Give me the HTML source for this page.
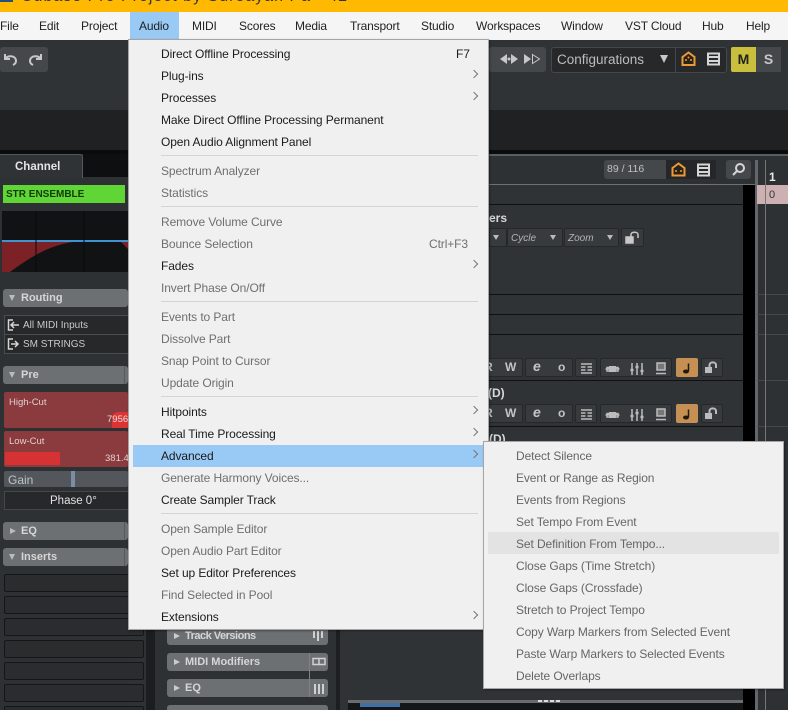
<!DOCTYPE html>
<html><head><meta charset="utf-8">
<style>
html,body{margin:0;padding:0;background:#2f3235}
#r{position:relative;width:788px;height:710px;overflow:hidden;font-family:"Liberation Sans",sans-serif;background:#2f3235}
#r div,#r span{position:absolute;white-space:nowrap}
.m{font-size:12px;letter-spacing:-.1px;color:#1b1b1b;line-height:16px;height:16px}
.i{left:161px}
.d{color:#6f6f6f}
.s{left:516px;color:#666}
.top{top:18px;font-size:12px;letter-spacing:-.15px;color:#222;line-height:16px}
.sep{left:161px;width:317px;height:1px;background:#d4d4d4}
.ar{left:471px;width:5px;height:5px;border-top:1px solid #777;border-right:1px solid #777;transform:rotate(45deg)}
.hd{background:#6d7073;border-radius:3px;height:18px;color:#d6d6d6;font-weight:bold;font-size:11px;line-height:19px}
.slot{left:4px;width:138px;height:16px;background:#2a2c2e;border:1px solid #151617;border-radius:2px}
.line{height:1px;background:#111}
.btn{background:#383b3e;border:1px solid #25272a;border-radius:2px;height:17px}
.g{color:#c4c4c4;font-weight:bold;font-size:12px}
.tri{width:0;height:0;border-left:3.500px solid transparent;border-right:3.500px solid transparent;border-top:6px solid #bbb}
</style></head><body>
<div id="r">
<div style="left:0;top:0;width:788px;height:12px;background:#ffb900"></div>
<div style="left:0;top:0;width:13px;height:2px;background:#23507f"></div>
<div style="left:21px;top:-11px;font-size:16px;line-height:16px;color:#333;letter-spacing:1px">Cubase Pro Project by Sureayan Pa - 42</div>
<div style="left:0;top:12px;width:788px;height:28px;background:#f5f5f5"></div>
<div style="left:130px;top:12px;width:49px;height:28px;background:#99c9f5"></div>
<span class="top" style="left:0">File</span><span class="top" style="left:39px">Edit</span><span class="top" style="left:81px">Project</span><span class="top" style="left:139px">Audio</span><span class="top" style="left:192px">MIDI</span><span class="top" style="left:239px">Scores</span><span class="top" style="left:295px">Media</span><span class="top" style="left:350px">Transport</span><span class="top" style="left:421px">Studio</span><span class="top" style="left:476px">Workspaces</span><span class="top" style="left:561px">Window</span><span class="top" style="left:625px">VST Cloud</span><span class="top" style="left:702px">Hub</span><span class="top" style="left:746px">Help</span>

<div style="left:0;top:40px;width:788px;height:70px;background:#303336"></div>
<div style="left:0;top:110px;width:788px;height:40px;background:#1f2123"></div>
<div style="left:0;top:150px;width:788px;height:4px;background:#0b0b0b"></div>
<div style="left:0;top:47px;width:48px;height:25px;background:#45484b;border-radius:3px"></div>
<svg style="position:absolute;left:2px;top:51px" width="44" height="17" fill="none" stroke="#c8c8c8" stroke-width="2"><path d="M3 3v5h5M3 8c2-4 11-4 11 2 0 2-1 3-3 4"/><path d="M39 3v5h-5M39 8c-2-4-11-4-11 2 0 2 1 3 3 4"/></svg>
<div style="left:489px;top:47px;width:57px;height:25px;background:#45484b;border-radius:3px"></div>
<svg style="position:absolute;left:498px;top:52px" width="46" height="14" fill="#c8c8c8"><path d="M2 7l7-5v10zM20 7l-7-5v10z"/><circle cx="11" cy="7" r="1.500"/><path d="M26 2l7 5-7 5z"/><path d="M34.500 2.500l7 4.500-7 4.500z" fill="none" stroke="#c8c8c8"/></svg>
<div style="left:551px;top:47px;width:174px;height:24px;background:#26282a;border:1px solid #45484b;border-radius:3px"></div>
<div style="left:557px;top:52px;font-size:13.500px;line-height:16px;color:#bdbdbd">Configurations</div>
<div style="left:660px;top:55px;border-left:4px solid transparent;border-right:4px solid transparent;border-top:8px solid #c8c8c8;width:0;height:0"></div>
<div style="left:675px;top:47px;width:1px;height:25px;background:#45484b"></div>
<svg style="position:absolute;left:681px;top:51px" width="15" height="16"><path d="M1.500 6L7.500 1.500 13.500 6V14H1.500z" fill="#2b2216" stroke="#ec9a3c" stroke-width="2"/><circle cx="5" cy="9" r="1" fill="#ec9a3c"/><circle cx="10" cy="9" r="1" fill="#ec9a3c"/><circle cx="7.500" cy="6.500" r="1" fill="#ec9a3c"/></svg>
<svg style="position:absolute;left:706px;top:52px" width="15" height="14" fill="none" stroke="#d5d5d5" stroke-width="2"><path d="M2 1.500H13V12.500H2zM2 5H13M2 9H13"/></svg>
<div style="left:731px;top:47px;width:25px;height:25px;background:#c9bf3c;border-radius:2px 0 0 2px;color:#222;font-weight:bold;font-size:14px;line-height:25px;text-align:center">M</div>
<div style="left:756px;top:47px;width:25px;height:25px;background:#45484b;color:#c8c8c8;font-weight:bold;font-size:14px;line-height:25px;text-align:center">S</div>

<!-- left panel -->
<div style="left:0;top:154px;width:128px;height:556px;background:#2e3134"></div>
<div style="left:0;top:154px;width:83px;height:24px;background:#303336;border:1px solid #55585b;border-bottom:0;border-left:0;border-radius:0 3px 0 0;box-sizing:border-box"></div>
<div style="left:83px;top:154px;width:50px;height:23px;background:#0e0f10"></div>
<div style="left:15px;top:159px;color:#e4e4e4;font-weight:bold;font-size:11.500px;line-height:16px">Channel</div>
<div style="left:3px;top:185px;width:122px;height:18px;background:#5fd635;color:#123a08;font-weight:bold;font-size:10px;line-height:19px;text-indent:3px">STR ENSEMBLE</div>
<div style="left:2px;top:211px;width:126px;height:61px;background:#101214"></div>
<svg style="position:absolute;left:2px;top:211px" width="128" height="61"><path d="M0 30V61H8C30 45 50 32 80 30H118L128 40V30z" fill="#7c2226"/><path d="M0 30H128" stroke="#3e93d0" stroke-width="2"/><path d="M34 0V61M82 0V61" stroke="#08090a"/></svg>
<div class="hd" style="left:3px;top:289px;width:125px;text-indent:18px">Routing</div>
<div class="tri" style="left:9px;top:295px"></div>
<div style="left:4px;top:315px;width:126px;height:18px;background:#26282a;border:1px solid #4a4d50"></div>
<div style="left:4px;top:334px;width:126px;height:18px;background:#26282a;border:1px solid #4a4d50"></div>
<div style="left:23px;top:318px;font-size:10px;line-height:15px;color:#c9c9c9">All MIDI Inputs</div>
<div style="left:23px;top:337px;font-size:10px;line-height:15px;color:#c9c9c9">SM STRINGS</div>
<svg style="position:absolute;left:7px;top:319px" width="14" height="31" fill="none" stroke="#d5d5d5" stroke-width="1.500"><path d="M6 1H1.500V11H6M12 6H5M7 3L4 6l3 3"/><path d="M6 20H1.500V30H6M4 25H11M8 22l3 3-3 3"/></svg>
<div class="hd" style="left:3px;top:366px;width:125px;text-indent:18px">Pre</div>
<div class="tri" style="left:9px;top:372px"></div>
<div style="left:124px;top:366px;width:1px;height:18px;background:#585b5e"></div>
<div style="left:4px;top:392px;width:124px;height:36px;background:#8b3a3e;border-radius:2px"></div>
<div style="left:112px;top:412px;width:16px;height:16px;background:#dc3434;border-radius:6px 0 0 0"></div>
<div style="left:9px;top:397px;color:#e0d0d0;font-size:9.500px;line-height:12px">High-Cut</div>
<div style="left:107px;top:414px;width:21px;overflow:hidden;color:#e7dede;font-size:9.500px;line-height:12px">7956Hz</div>
<div style="left:4px;top:431px;width:124px;height:36px;background:#8b3a3e;border-radius:2px"></div>
<div style="left:5px;top:452px;width:55px;height:13px;background:#d63234"></div>
<div style="left:9px;top:436px;color:#e0d0d0;font-size:9.500px;line-height:12px">Low-Cut</div>
<div style="left:105px;top:453px;width:23px;overflow:hidden;color:#dcd2d2;font-size:9.500px;line-height:12px">381.4Hz</div>
<div style="left:4px;top:471px;width:124px;height:16px;background:#53575b;border-radius:2px"></div>
<div style="left:71px;top:471px;width:4px;height:16px;background:#7a8fa5"></div>
<div style="left:8px;top:472px;color:#bcc3c8;font-size:12px;line-height:16px">Gain</div>
<div style="left:4px;top:491px;width:124px;height:17px;background:#26282a;border:1px solid #45484b"></div>
<div style="left:50px;top:494px;color:#e2e2e2;font-size:11.500px;line-height:15px">Phase 0°</div>
<div class="hd" style="left:3px;top:522px;width:125px;text-indent:18px">EQ</div>
<div style="left:10px;top:528px;border-top:3.500px solid transparent;border-bottom:3.500px solid transparent;border-left:6px solid #bbb;width:0;height:0"></div>
<div style="left:124px;top:522px;width:1px;height:18px;background:#585b5e"></div>
<div class="hd" style="left:3px;top:548px;width:125px;text-indent:18px">Inserts</div>
<div class="tri" style="left:9px;top:554px"></div>
<div style="left:124px;top:548px;width:1px;height:18px;background:#585b5e"></div>
<div class="slot" style="top:574px"></div><div class="slot" style="top:596px"></div><div class="slot" style="top:618px"></div><div class="slot" style="top:640px"></div><div class="slot" style="top:662px"></div><div class="slot" style="top:684px"></div><div class="slot" style="top:706px"></div>
<div style="left:146px;top:154px;width:9px;height:556px;background:#1b1d1f"></div>
<div style="left:155px;top:154px;width:185px;height:556px;background:#2e3134"></div>
<div style="left:336px;top:154px;width:4px;height:556px;background:#1c1e20"></div>
<div style="left:340px;top:154px;width:403px;height:556px;background:#303336"></div>

<!-- center -->
<div style="left:340px;top:154px;width:415px;height:30px;background:#2e3134"></div>
<div style="left:489px;top:154px;width:299px;height:2px;background:#5a5d60"></div>
<div style="left:489px;top:184px;width:266px;height:1px;background:#6e7174"></div>
<div style="left:604px;top:160px;width:62px;height:19px;background:#45484b;border-radius:3px 0 0 3px"></div>
<div style="left:607px;top:163px;color:#c0c0c0;font-size:10.500px;line-height:13px">89 / 116</div>
<div style="left:666px;top:160px;width:50px;height:19px;background:#24262a"></div>
<svg style="position:absolute;left:671px;top:162px" width="15" height="15"><path d="M1.500 6L7.500 1.500 13.500 6V13.500H1.500z" fill="#2b2216" stroke="#ec9a3c" stroke-width="2"/><circle cx="5" cy="9" r="1" fill="#ec9a3c"/><circle cx="10" cy="9" r="1" fill="#ec9a3c"/></svg>
<svg style="position:absolute;left:696px;top:163px" width="15" height="14" fill="none" stroke="#d5d5d5" stroke-width="2"><path d="M2 1.500H13V12.500H2zM2 5H13M2 9H13"/></svg>
<div style="left:726px;top:160px;width:25px;height:19px;background:#45484b;border-radius:3px"></div>
<svg style="position:absolute;left:731px;top:162px" width="15" height="15" fill="none" stroke="#d5d5d5" stroke-width="2"><circle cx="9" cy="6" r="4"/><path d="M6 9L2 13"/></svg>
<div style="left:743px;top:185px;width:12px;height:525px;background:#000"></div>
<div style="left:755px;top:160px;width:33px;height:550px;background:#2e3134"></div>
<div style="left:755px;top:160px;width:3px;height:550px;background:#63666a"></div>
<div style="left:757px;top:294px;width:31px;height:1px;background:#45484b"></div>
<div style="left:757px;top:314px;width:31px;height:1px;background:#45484b"></div>
<div style="left:757px;top:334px;width:31px;height:1px;background:#45484b"></div>
<div style="left:757px;top:380px;width:31px;height:1px;background:#45484b"></div>
<div style="left:757px;top:426px;width:31px;height:1px;background:#45484b"></div>
<div style="left:757px;top:185px;width:31px;height:19px;background:#cdb0b1"></div>
<div style="left:765px;top:160px;width:1px;height:550px;background:#777"></div>
<div style="left:769px;top:189px;color:#333;font-size:11px;line-height:12px">0</div>
<div style="left:769px;top:170px;color:#e8e8e8;font-weight:bold;font-size:12px;line-height:14px">1</div>
<div class="line" style="left:489px;top:204px;width:254px"></div>
<div style="left:489px;top:211px;color:#d8d8d8;font-weight:bold;font-size:12px;line-height:14px">ers</div>
<div class="btn" style="left:489px;top:228px;width:16px"></div><div class="btn" style="left:507px;top:228px;width:54px"></div><div class="btn" style="left:564px;top:228px;width:53px"></div><div class="btn" style="left:621px;top:228px;width:21px"></div>
<div style="left:511px;top:232px;color:#b4b4b4;font-style:italic;font-size:10px;line-height:13px">Cycle</div>
<div style="left:568px;top:232px;color:#b4b4b4;font-style:italic;font-size:10px;line-height:13px">Zoom</div>
<div class="tri" style="left:493px;top:235px;border-left-width:3px;border-right-width:3px;border-top-width:5px"></div><div class="tri" style="left:550px;top:235px;border-left-width:3px;border-right-width:3px;border-top-width:5px"></div><div class="tri" style="left:607px;top:235px;border-left-width:3px;border-right-width:3px;border-top-width:5px"></div>
<div class="line" style="left:489px;top:294px;width:254px"></div>
<div class="line" style="left:489px;top:314px;width:254px"></div>
<div class="line" style="left:489px;top:334px;width:254px"></div>
<div class="line" style="left:489px;top:380px;width:254px"></div>
<div class="line" style="left:489px;top:426px;width:254px"></div>
<div style="left:488px;top:386px;color:#d8d8d8;font-weight:bold;font-size:12px;line-height:14px">(D)</div>
<div style="left:489px;top:432px;color:#d8d8d8;font-weight:bold;font-size:12px;line-height:14px">(D)</div>
<div class="btn" style="left:480px;top:358px;width:41px"></div><div class="btn" style="left:525px;top:358px;width:46px"></div><div class="btn" style="left:575px;top:358px;width:20px"></div><div class="btn" style="left:600px;top:358px;width:70px"></div><div style="left:676px;top:358px;width:22px;height:19px;background:#c68f54;border-radius:2px"></div><div class="btn" style="left:701px;top:358px;width:20px"></div>
<div class="btn" style="left:480px;top:404px;width:41px"></div><div class="btn" style="left:525px;top:404px;width:46px"></div><div class="btn" style="left:575px;top:404px;width:20px"></div><div class="btn" style="left:600px;top:404px;width:70px"></div><div style="left:676px;top:404px;width:22px;height:19px;background:#c68f54;border-radius:2px"></div><div class="btn" style="left:701px;top:404px;width:20px"></div>
<div class="g" style="left:484px;top:360px;line-height:15px">R</div><div class="g" style="left:484px;top:406px;line-height:15px">R</div>
<div class="g" style="left:505px;top:360px;line-height:15px">W</div><div class="g" style="left:505px;top:406px;line-height:15px">W</div>
<div class="g" style="left:533px;top:359px;line-height:15px;font-style:italic;font-size:14px">e</div><div class="g" style="left:533px;top:405px;line-height:15px;font-style:italic;font-size:14px">e</div>
<div class="g" style="left:558px;top:360px;line-height:15px">o</div><div class="g" style="left:558px;top:406px;line-height:15px">o</div>
<svg style="position:absolute;left:578px;top:358px" width="145" height="66" fill="none" stroke="#bcbcbc" stroke-width="1.500">
<g id="a"><path d="M3 6H14M3 9H7.500M9.500 9H14M3 12H7.500M9.500 12H14M3 15H14" /><rect x="31" y="8" width="7" height="6" fill="#bcbcbc" stroke="none"/><path d="M29 9.500H40V13H29zM27.500 11H41.500"/><path d="M54 5V17M59 5V17M64 5V17"/><path d="M52.500 12H55.500M57.500 9H60.500M62.500 13H65.500" stroke-width="2.500"/><path d="M79 5H87V12H79z" fill="#777"/><path d="M78 15.500H88"/><ellipse cx="108" cy="13.500" rx="3" ry="2" fill="#23180c" stroke="none"/><path d="M110.500 13V5.500" stroke="#23180c"/><path d="M127 9H134V15H127z" fill="#bcbcbc" stroke="none"/><path d="M131.500 9V7C131.500 3.500 138 3.500 138 7V10" stroke-width="2"/></g>
<g transform="translate(0,46)"><path d="M3 6H14M3 9H7.500M9.500 9H14M3 12H7.500M9.500 12H14M3 15H14"/><rect x="31" y="8" width="7" height="6" fill="#bcbcbc" stroke="none"/><path d="M29 9.500H40V13H29zM27.500 11H41.500"/><path d="M54 5V17M59 5V17M64 5V17"/><path d="M52.500 12H55.500M57.500 9H60.500M62.500 13H65.500" stroke-width="2.500"/><path d="M79 5H87V12H79z" fill="#777"/><path d="M78 15.500H88"/><ellipse cx="108" cy="13.500" rx="3" ry="2" fill="#23180c" stroke="none"/><path d="M110.500 13V5.500" stroke="#23180c"/><path d="M127 9H134V15H127z" fill="#bcbcbc" stroke="none"/><path d="M131.500 9V7C131.500 3.500 138 3.500 138 7V10" stroke-width="2"/></g></svg>
<svg style="position:absolute;left:625px;top:231px" width="15" height="13" fill="none" stroke="#c8c8c8" stroke-width="1.500"><path d="M1 6H8V12H1z" fill="#c8c8c8"/><path d="M6 6V3.500C6 0.500 13 0.500 13 3.500V7"/></svg>
<!-- bottom -->
<div class="hd" style="left:167px;top:627px;width:161px;text-indent:18px;letter-spacing:-.5px;height:18px">Track Versions</div>
<div class="hd" style="left:167px;top:653px;width:161px;text-indent:18px">MIDI Modifiers</div>
<div class="hd" style="left:167px;top:679px;width:161px;text-indent:18px">EQ</div>
<div class="hd" style="left:167px;top:705px;width:161px"></div>
<div style="left:174px;top:633px;border-top:3.500px solid transparent;border-bottom:3.500px solid transparent;border-left:6px solid #ccc;width:0;height:0"></div>
<div style="left:174px;top:659px;border-top:3.500px solid transparent;border-bottom:3.500px solid transparent;border-left:6px solid #ccc;width:0;height:0"></div>
<div style="left:174px;top:685px;border-top:3.500px solid transparent;border-bottom:3.500px solid transparent;border-left:6px solid #ccc;width:0;height:0"></div>
<div style="left:309px;top:653px;width:1px;height:44px;background:#808386"></div>
<svg style="position:absolute;left:312px;top:630px" width="14" height="66" fill="none" stroke="#d0d0d0" stroke-width="2"><path d="M2 1V8M6 1V11M10 1V8"/><path d="M1 28.500H13V34.500H1zM7 28.500V34.500" stroke-width="1.500"/><path d="M3 54V64M7 54V64M11 54V64"/></svg>
<div style="left:348px;top:700px;width:395px;height:3px;background:#6a6d70"></div>
<div style="left:348px;top:703px;width:395px;height:7px;background:#151617"></div>
<div style="left:360px;top:703px;width:40px;height:4px;background:#3f6fa6"></div>
<div style="left:538px;top:700px;width:24px;height:2px;background:repeating-linear-gradient(90deg,#ddd 0 4px,transparent 4px 6px)"></div>

<!-- main menu -->
<div style="left:128px;top:39px;width:361px;height:591px;background:#f0f0f0;border:1px solid #a5a5a5;box-sizing:border-box;box-shadow:1px 1px 2px rgba(0,0,0,.35)"></div>
<div class="sep" style="top:155px"></div><div class="sep" style="top:206px"></div><div class="sep" style="top:301px"></div><div class="sep" style="top:396px"></div><div class="sep" style="top:513px"></div>
<div style="left:133px;top:445px;width:351px;height:22px;background:#99c9f5"></div>
<span class="m i" style="top:46px">Direct Offline Processing</span><span class="m" style="top:46px;left:456px">F7</span>
<span class="m i" style="top:68px">Plug-ins</span><span class="m i" style="top:90px">Processes</span><span class="m i" style="top:112px">Make Direct Offline Processing Permanent</span><span class="m i" style="top:134px">Open Audio Alignment Panel</span>
<span class="m i d" style="top:163px">Spectrum Analyzer</span><span class="m i d" style="top:185px">Statistics</span>
<span class="m i d" style="top:214px">Remove Volume Curve</span><span class="m i d" style="top:236px">Bounce Selection</span><span class="m d" style="top:236px;left:429px">Ctrl+F3</span><span class="m i" style="top:258px">Fades</span><span class="m i d" style="top:280px">Invert Phase On/Off</span>
<span class="m i d" style="top:309px">Events to Part</span><span class="m i d" style="top:331px">Dissolve Part</span><span class="m i d" style="top:353px">Snap Point to Cursor</span><span class="m i d" style="top:375px">Update Origin</span>
<span class="m i" style="top:404px">Hitpoints</span><span class="m i" style="top:426px">Real Time Processing</span><span class="m i" style="top:448px">Advanced</span><span class="m i d" style="top:470px">Generate Harmony Voices...</span><span class="m i" style="top:492px">Create Sampler Track</span>
<span class="m i d" style="top:521px">Open Sample Editor</span><span class="m i d" style="top:543px">Open Audio Part Editor</span><span class="m i" style="top:565px">Set up Editor Preferences</span><span class="m i d" style="top:587px">Find Selected in Pool</span><span class="m i" style="top:609px">Extensions</span>
<div class="ar" style="top:71px"></div><div class="ar" style="top:93px"></div><div class="ar" style="top:261px"></div><div class="ar" style="top:407px"></div><div class="ar" style="top:429px"></div><div class="ar" style="top:451px"></div><div class="ar" style="top:612px"></div>

<!-- submenu -->
<div style="left:483px;top:441px;width:301px;height:248px;background:#f0f0f0;border:1px solid #a5a5a5;box-sizing:border-box;box-shadow:1px 1px 2px rgba(0,0,0,.35)"></div>
<div style="left:488px;top:532px;width:291px;height:22px;background:#e3e3e3"></div>
<span class="m s" style="top:448px">Detect Silence</span><span class="m s" style="top:470px">Event or Range as Region</span><span class="m s" style="top:492px">Events from Regions</span><span class="m s" style="top:514px">Set Tempo From Event</span><span class="m s" style="top:536px">Set Definition From Tempo...</span><span class="m s" style="top:558px">Close Gaps (Time Stretch)</span><span class="m s" style="top:580px">Close Gaps (Crossfade)</span><span class="m s" style="top:602px">Stretch to Project Tempo</span><span class="m s" style="top:624px">Copy Warp Markers from Selected Event</span><span class="m s" style="top:646px">Paste Warp Markers to Selected Events</span><span class="m s" style="top:668px">Delete Overlaps</span>
</div>
</body></html>
